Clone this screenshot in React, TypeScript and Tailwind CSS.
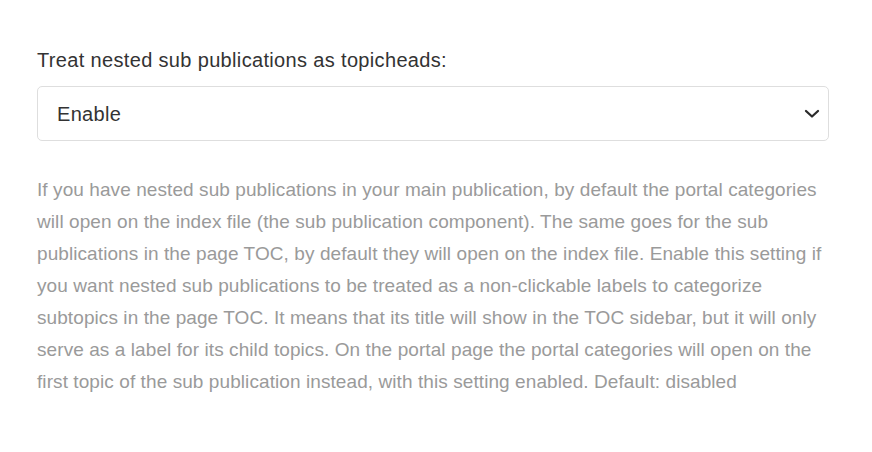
const lines = [
    'If you have nested sub publications in your main publication, by default the portal categories',
    'will open on the index file (the sub publication component). The same goes for the sub',
    'publications in the page TOC, by default they will open on the index file. Enable this setting if',
    'you want nested sub publications to be treated as a non-clickable labels to categorize',
    'subtopics in the page TOC. It means that its title will show in the TOC sidebar, but it will only',
    'serve as a label for its child topics. On the portal page the portal categories will open on the',
    'first topic of the sub publication instead, with this setting enabled. Default: disabled',
];

export default function App() {
    return (
        <div className="min-h-[452px] w-[872px] bg-white pl-[37px] pr-[43px] pt-[46px]" style={{ fontFamily: '"Liberation Sans", Arial, sans-serif' }}>
            <label className="block text-[20px] leading-[28px] tracking-[0.34px] text-[#333]">Treat nested sub publications as topicheads:</label>
            <div className="mt-[12px] flex h-[55px] items-center justify-between rounded-[5px] border border-[#dedede] bg-white pl-[19px] pr-[8px]">
                <span className="text-[20px] tracking-[0.3px] text-[#333]">Enable</span>
                <svg width="16" height="10" viewBox="0 0 16 10" className="mt-[1px]">
                    <polyline points="2,2 8,7.5 14,2" fill="none" stroke="#2b2b2b" strokeWidth="2.3" strokeLinecap="round" strokeLinejoin="round" />
                </svg>
            </div>
            <p className="mt-[33px] mr-[-40px] whitespace-nowrap text-[19px] leading-[32px] tracking-[0.08px] text-[#9a9a9a]">
                {lines.map((l, i) => (
                    <span key={i} className="block">{l}</span>
                ))}
            </p>
        </div>
    );
}
